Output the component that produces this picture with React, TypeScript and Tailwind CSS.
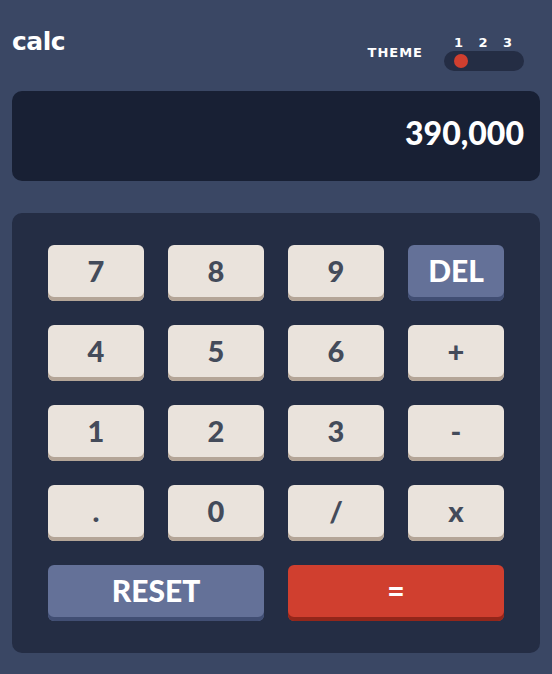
import React from "react";

const Key = ({ label }: { label: string }) => {
  return (
    <button className="h-14 rounded-md bg-[#eae3dc] shadow-[inset_0_-4px_0_#b4a597] flex items-center justify-center pb-[5px] text-[29px] leading-none font-black text-[#444b5a]">
      {label}
    </button>
  );
};

const App = () => {
  const keys = ["7", "8", "9", "DEL", "4", "5", "6", "+", "1", "2", "3", "-", ".", "0", "/", "x"];

  return (
    <div className="min-h-screen w-full bg-[#3a4764] pt-7 font-['Lato',sans-serif]">
      <div className="flex justify-between items-start pl-3 pr-7">
        <h1 className="mt-[1px] text-[25px] leading-none font-bold tracking-[-0.5px] text-white font-['DejaVu_Sans',sans-serif]">
          calc
        </h1>
        <div className="flex items-start gap-[21px] mt-2 font-['DejaVu_Sans',sans-serif]">
          <span className="mt-[10px] text-[13px] leading-none font-bold tracking-[1px] text-white">
            THEME
          </span>
          <div className="flex flex-col w-20">
            <div className="flex justify-between pl-[10px] pr-[12px] text-[13px] leading-none font-bold text-white">
              <span>1</span>
              <span>2</span>
              <span>3</span>
            </div>
            <div className="mt-[2px] h-5 w-20 rounded-full bg-[#242d44] flex items-center">
              <div className="ml-[10px] h-[14px] w-[14px] rounded-full bg-[#d03f2f]"></div>
            </div>
          </div>
        </div>
      </div>

      <div className="mx-3 mt-5 h-[90px] rounded-[10px] bg-[#182034] flex items-center justify-end pr-4 pb-[7px]">
        <span className="text-[32px] leading-none font-black text-white">390,000</span>
      </div>

      <div className="mx-3 mt-8 rounded-[10px] bg-[#242d44] px-9 py-8 grid grid-cols-4 gap-6">
        {keys.map((k) =>
          k === "DEL" ? (
            <button
              key={k}
              className="h-14 rounded-md bg-[#647198] shadow-[inset_0_-4px_0_#414e73] flex items-center justify-center pb-[6px] text-[30px] leading-none font-black text-white"
            >
              DEL
            </button>
          ) : (
            <Key key={k} label={k} />
          )
        )}
        <button className="col-span-2 h-14 rounded-md bg-[#647198] shadow-[inset_0_-4px_0_#414e73] flex items-center justify-center pb-[6px] text-[30px] leading-none font-black text-white">
          RESET
        </button>
        <button className="col-span-2 h-14 rounded-md bg-[#d03f2f] shadow-[inset_0_-4px_0_#93261a] flex items-center justify-center pb-[6px] text-[30px] leading-none font-black text-white">
          =
        </button>
      </div>
    </div>
  );
};

export default App;
